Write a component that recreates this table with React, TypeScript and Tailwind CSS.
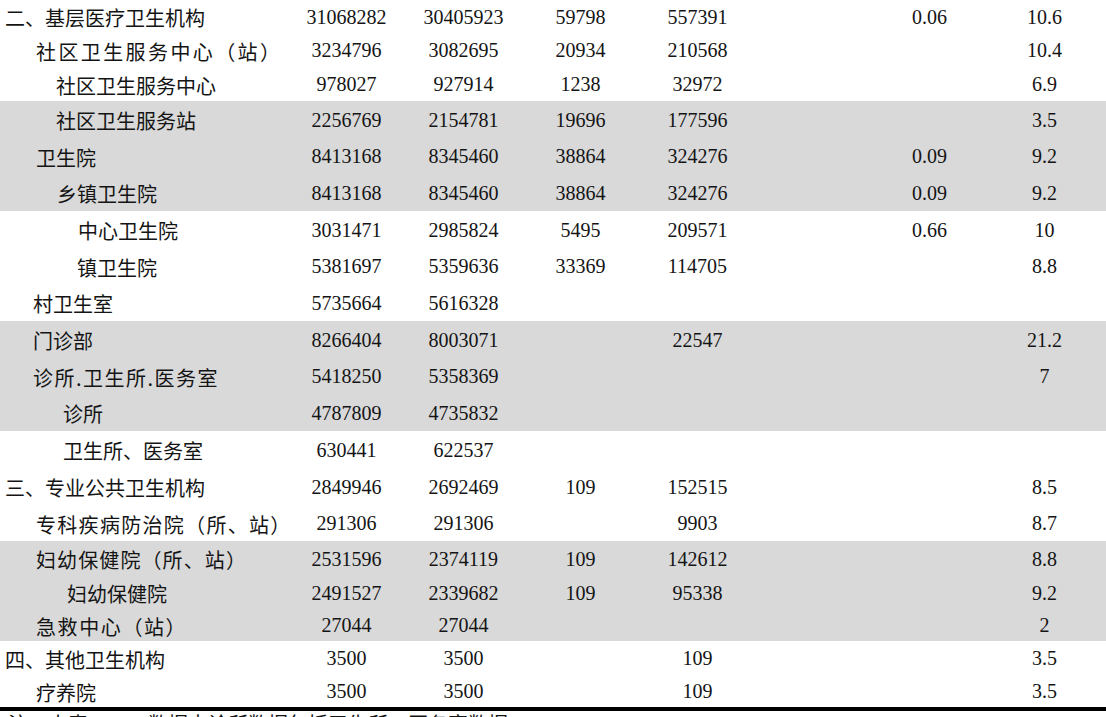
import React from "react";

type Row = {
  name: string;
  indent: string;
  track?: string;
  vals: string[];
  gray?: boolean;
  h: string;
};

const rows: Row[] = [
  { name: "二、基层医疗卫生机构", indent: "pl-[5px]", vals: ["31068282", "30405923", "59798", "557391", "", "0.06", "10.6"], h: "h-[33px]" },
  { name: "社区卫生服务中心（站）", indent: "pl-[36px]", track: "tracking-[2.4px]", vals: ["3234796", "3082695", "20934", "210568", "", "", "10.4"], h: "h-[34px]" },
  { name: "社区卫生服务中心", indent: "pl-[56px]", vals: ["978027", "927914", "1238", "32972", "", "", "6.9"], h: "h-[34px]" },
  { name: "社区卫生服务站", indent: "pl-[56px]", vals: ["2256769", "2154781", "19696", "177596", "", "", "3.5"], gray: true, h: "h-[37px]" },
  { name: "卫生院", indent: "pl-[36px]", vals: ["8413168", "8345460", "38864", "324276", "", "0.09", "9.2"], gray: true, h: "h-[36px]" },
  { name: "乡镇卫生院", indent: "pl-[57px]", vals: ["8413168", "8345460", "38864", "324276", "", "0.09", "9.2"], gray: true, h: "h-[37px]" },
  { name: "中心卫生院", indent: "pl-[78px]", vals: ["3031471", "2985824", "5495", "209571", "", "0.66", "10"], h: "h-[37px]" },
  { name: "镇卫生院", indent: "pl-[77px]", vals: ["5381697", "5359636", "33369", "114705", "", "", "8.8"], h: "h-[36px]" },
  { name: "村卫生室", indent: "pl-[33px]", vals: ["5735664", "5616328", "", "", "", "", ""], h: "h-[37px]" },
  { name: "门诊部", indent: "pl-[33px]", vals: ["8266404", "8003071", "", "22547", "", "", "21.2"], gray: true, h: "h-[37px]" },
  { name: "诊所.卫生所.医务室", indent: "pl-[33px]", track: "tracking-[1.5px]", vals: ["5418250", "5358369", "", "", "", "", "7"], gray: true, h: "h-[36px]" },
  { name: "诊所", indent: "pl-[63px]", vals: ["4787809", "4735832", "", "", "", "", ""], gray: true, h: "h-[37px]" },
  { name: "卫生所、医务室", indent: "pl-[63px]", vals: ["630441", "622537", "", "", "", "", ""], h: "h-[37px]" },
  { name: "三、专业公共卫生机构", indent: "pl-[5px]", vals: ["2849946", "2692469", "109", "152515", "", "", "8.5"], h: "h-[37px]" },
  { name: "专科疾病防治院（所、站）", indent: "pl-[36px]", track: "tracking-[1.3px]", vals: ["291306", "291306", "", "9903", "", "", "8.7"], h: "h-[36px]" },
  { name: "妇幼保健院（所、站）", indent: "pl-[36px]", track: "tracking-[1.1px]", vals: ["2531596", "2374119", "109", "142612", "", "", "8.8"], gray: true, h: "h-[35px]" },
  { name: "妇幼保健院", indent: "pl-[67px]", vals: ["2491527", "2339682", "109", "95338", "", "", "9.2"], gray: true, h: "h-[33px]" },
  { name: "急救中心（站）", indent: "pl-[36px]", track: "tracking-[1.6px]", vals: ["27044", "27044", "", "", "", "", "2"], gray: true, h: "h-[32px]" },
  { name: "四、其他卫生机构", indent: "pl-[5px]", vals: ["3500", "3500", "", "109", "", "", "3.5"], h: "h-[34px]" },
  { name: "疗养院", indent: "pl-[36px]", vals: ["3500", "3500", "", "109", "", "", "3.5"], h: "h-[32px]" },
];

const colW = ["w-[117px]", "w-[117px]", "w-[117px]", "w-[117px]", "w-[115px]", "w-[117px]", "w-[113px]"];

export default function App() {
  return (
    <div className="w-[1106px] h-[717px] overflow-hidden bg-white text-[#141414]">
      {rows.map((r, i) => (
        <div
          key={i}
          className={`flex items-center ${r.h} ${r.gray ? "bg-[#d9d9d9]" : "bg-white"}`}
        >
          <div
            className={`w-[288px] shrink-0 whitespace-nowrap text-[20px] leading-none pt-[3px] ${r.indent} ${r.track ?? ""}`}
            style={{ fontFamily: '"Noto Sans CJK SC", "Noto Sans", sans-serif' }}
          >
            {r.name}
          </div>
          {r.vals.map((v, j) => (
            <div
              key={j}
              className={`${colW[j]} shrink-0 text-center text-[20px] leading-none`}
              style={{ fontFamily: '"Liberation Serif", "Times New Roman", serif' }}
            >
              {v}
            </div>
          ))}
        </div>
      ))}
      <div className="h-[4px] bg-black" />
      <div
        className="pl-[8px] pt-[3px] text-[20px] leading-none whitespace-nowrap"
        style={{ fontFamily: '"Noto Sans CJK SC", "Noto Sans", sans-serif' }}
      >
        注：本表　　　数据中诊所数据包括卫生所、医务室数据。
      </div>
    </div>
  );
}
